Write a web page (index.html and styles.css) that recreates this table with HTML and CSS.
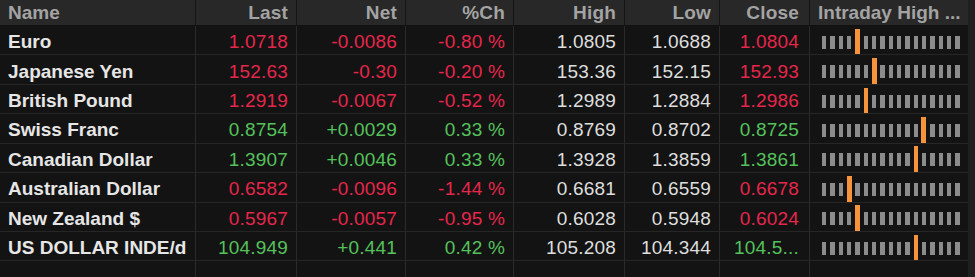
FILE: index.html
```html
<!DOCTYPE html>
<html>
<head>
<meta charset="utf-8">
<link rel="stylesheet" href="styles.css">
</head>
<body>
<div class="wrap">
  <div class="table">
    <div class="row head">
      <div class="c name">Name</div>
      <div class="c num">Last</div>
      <div class="c num">Net</div>
      <div class="c num">%Ch</div>
      <div class="c num">High</div>
      <div class="c num">Low</div>
      <div class="c num close">Close</div>
      <div class="c intra">Intraday High ...</div>
    </div>

    <div class="row">
      <div class="c name">Euro</div>
      <div class="c num red">1.0718</div>
      <div class="c num red">-0.0086</div>
      <div class="c num red">-0.80 %</div>
      <div class="c num">1.0805</div>
      <div class="c num">1.0688</div>
      <div class="c num close red">1.0804</div>
      <div class="c bar"><div class="blocks"><i></i><i></i><i></i><i></i><i></i><i></i><i></i><i></i><i></i><i></i><i></i><i></i><i></i><i></i><i></i><i></i><i></i><b style="left:33.3px"></b></div></div>
    </div>
    <div class="row">
      <div class="c name">Japanese Yen</div>
      <div class="c num red">152.63</div>
      <div class="c num red">-0.30</div>
      <div class="c num red">-0.20 %</div>
      <div class="c num">153.36</div>
      <div class="c num">152.15</div>
      <div class="c num close red">152.93</div>
      <div class="c bar"><div class="blocks"><i></i><i></i><i></i><i></i><i></i><i></i><i></i><i></i><i></i><i></i><i></i><i></i><i></i><i></i><i></i><i></i><i></i><b style="left:50px"></b></div></div>
    </div>
    <div class="row">
      <div class="c name">British Pound</div>
      <div class="c num red">1.2919</div>
      <div class="c num red">-0.0067</div>
      <div class="c num red">-0.52 %</div>
      <div class="c num">1.2989</div>
      <div class="c num">1.2884</div>
      <div class="c num close red">1.2986</div>
      <div class="c bar"><div class="blocks"><i></i><i></i><i></i><i></i><i></i><i></i><i></i><i></i><i></i><i></i><i></i><i></i><i></i><i></i><i></i><i></i><i></i><b style="left:41.7px"></b></div></div>
    </div>
    <div class="row">
      <div class="c name">Swiss Franc</div>
      <div class="c num green">0.8754</div>
      <div class="c num green">+0.0029</div>
      <div class="c num green">0.33 %</div>
      <div class="c num">0.8769</div>
      <div class="c num">0.8702</div>
      <div class="c num close green">0.8725</div>
      <div class="c bar"><div class="blocks"><i></i><i></i><i></i><i></i><i></i><i></i><i></i><i></i><i></i><i></i><i></i><i></i><i></i><i></i><i></i><i></i><i></i><b style="left:99px"></b></div></div>
    </div>
    <div class="row">
      <div class="c name">Canadian Dollar</div>
      <div class="c num green">1.3907</div>
      <div class="c num green">+0.0046</div>
      <div class="c num green">0.33 %</div>
      <div class="c num">1.3928</div>
      <div class="c num">1.3859</div>
      <div class="c num close green">1.3861</div>
      <div class="c bar"><div class="blocks"><i></i><i></i><i></i><i></i><i></i><i></i><i></i><i></i><i></i><i></i><i></i><i></i><i></i><i></i><i></i><i></i><i></i><b style="left:91.6px"></b></div></div>
    </div>
    <div class="row">
      <div class="c name">Australian Dollar</div>
      <div class="c num red">0.6582</div>
      <div class="c num red">-0.0096</div>
      <div class="c num red">-1.44 %</div>
      <div class="c num">0.6681</div>
      <div class="c num">0.6559</div>
      <div class="c num close red">0.6678</div>
      <div class="c bar"><div class="blocks"><i></i><i></i><i></i><i></i><i></i><i></i><i></i><i></i><i></i><i></i><i></i><i></i><i></i><i></i><i></i><i></i><i></i><b style="left:25px"></b></div></div>
    </div>
    <div class="row">
      <div class="c name">New Zealand $</div>
      <div class="c num red">0.5967</div>
      <div class="c num red">-0.0057</div>
      <div class="c num red">-0.95 %</div>
      <div class="c num">0.6028</div>
      <div class="c num">0.5948</div>
      <div class="c num close red">0.6024</div>
      <div class="c bar"><div class="blocks"><i></i><i></i><i></i><i></i><i></i><i></i><i></i><i></i><i></i><i></i><i></i><i></i><i></i><i></i><i></i><i></i><i></i><b style="left:33.3px"></b></div></div>
    </div>
    <div class="row">
      <div class="c name">US DOLLAR INDE/d</div>
      <div class="c num green">104.949</div>
      <div class="c num green">+0.441</div>
      <div class="c num green">0.42 %</div>
      <div class="c num">105.208</div>
      <div class="c num">104.344</div>
      <div class="c num close green">104.5...</div>
      <div class="c bar"><div class="blocks"><i></i><i></i><i></i><i></i><i></i><i></i><i></i><i></i><i></i><i></i><i></i><i></i><i></i><i></i><i></i><i></i><i></i><b style="left:91.6px"></b></div></div>
    </div>
    <div class="row empty">
      <div class="c"></div><div class="c"></div><div class="c"></div><div class="c"></div><div class="c"></div><div class="c"></div><div class="c"></div><div class="c"></div>
    </div>
  </div>
  <div class="edge"></div>
</div>
</body>
</html>
```

FILE: styles.css
```css
* { box-sizing: border-box; }
html, body { margin: 0; padding: 0; background: #141414; }
body { width: 975px; height: 277px; overflow: hidden; }
.wrap { display: flex; height: 277px; }
.table { width: 968px; display: flex; flex-direction: column; background: #131313; }
.edge { flex: 1; background: #1f1f1f; }
.row {
  display: grid;
  grid-template-columns: 196px 101px 109px 108px 111px 95px 90px 158px;
  height: 29.43px;
  border-bottom: 1px solid #262626;
  font-family: "Liberation Sans", Arial, sans-serif;
  font-size: 19px;
  color: #dedede;
}
.row .c { padding-top: 4px; }
.row.head {
  height: 26px;
  background: #282828;
  border-bottom: 1px solid #111;
  color: #a3a3a3;
  font-weight: bold;
}
.row.head .c { padding-top: 1px; }
.row.empty { flex: 1; border-bottom: none; }
.c {
  display: flex;
  align-items: center;
  border-right: 1px solid #2a2a2a;
  white-space: nowrap;
  overflow: hidden;
  position: relative;
}
.head .c { border-right-color: #161616; }
.c:last-child { border-right: none; }
.name { padding-left: 8px; font-weight: bold; color: #e6e6e6; }
.head .name { color: #a3a3a3; }
.num { justify-content: flex-end; padding-right: 8px; letter-spacing: 0.2px; }
.close { padding-right: 10px; }
.intra { padding-left: 8px; }
.red { color: #e6264b; }
.green { color: #55c15c; }
.bar { padding-left: 12px; }
.blocks { position: relative; display: flex; gap: 4px; height: 27px; align-items: center; }
.blocks i { display: block; width: 4.33px; height: 13px; background: #8c8c8c; }
.blocks b {
  position: absolute;
  top: 0;
  width: 4.8px;
  height: 27px;
  background: #f7933b;
}
```
